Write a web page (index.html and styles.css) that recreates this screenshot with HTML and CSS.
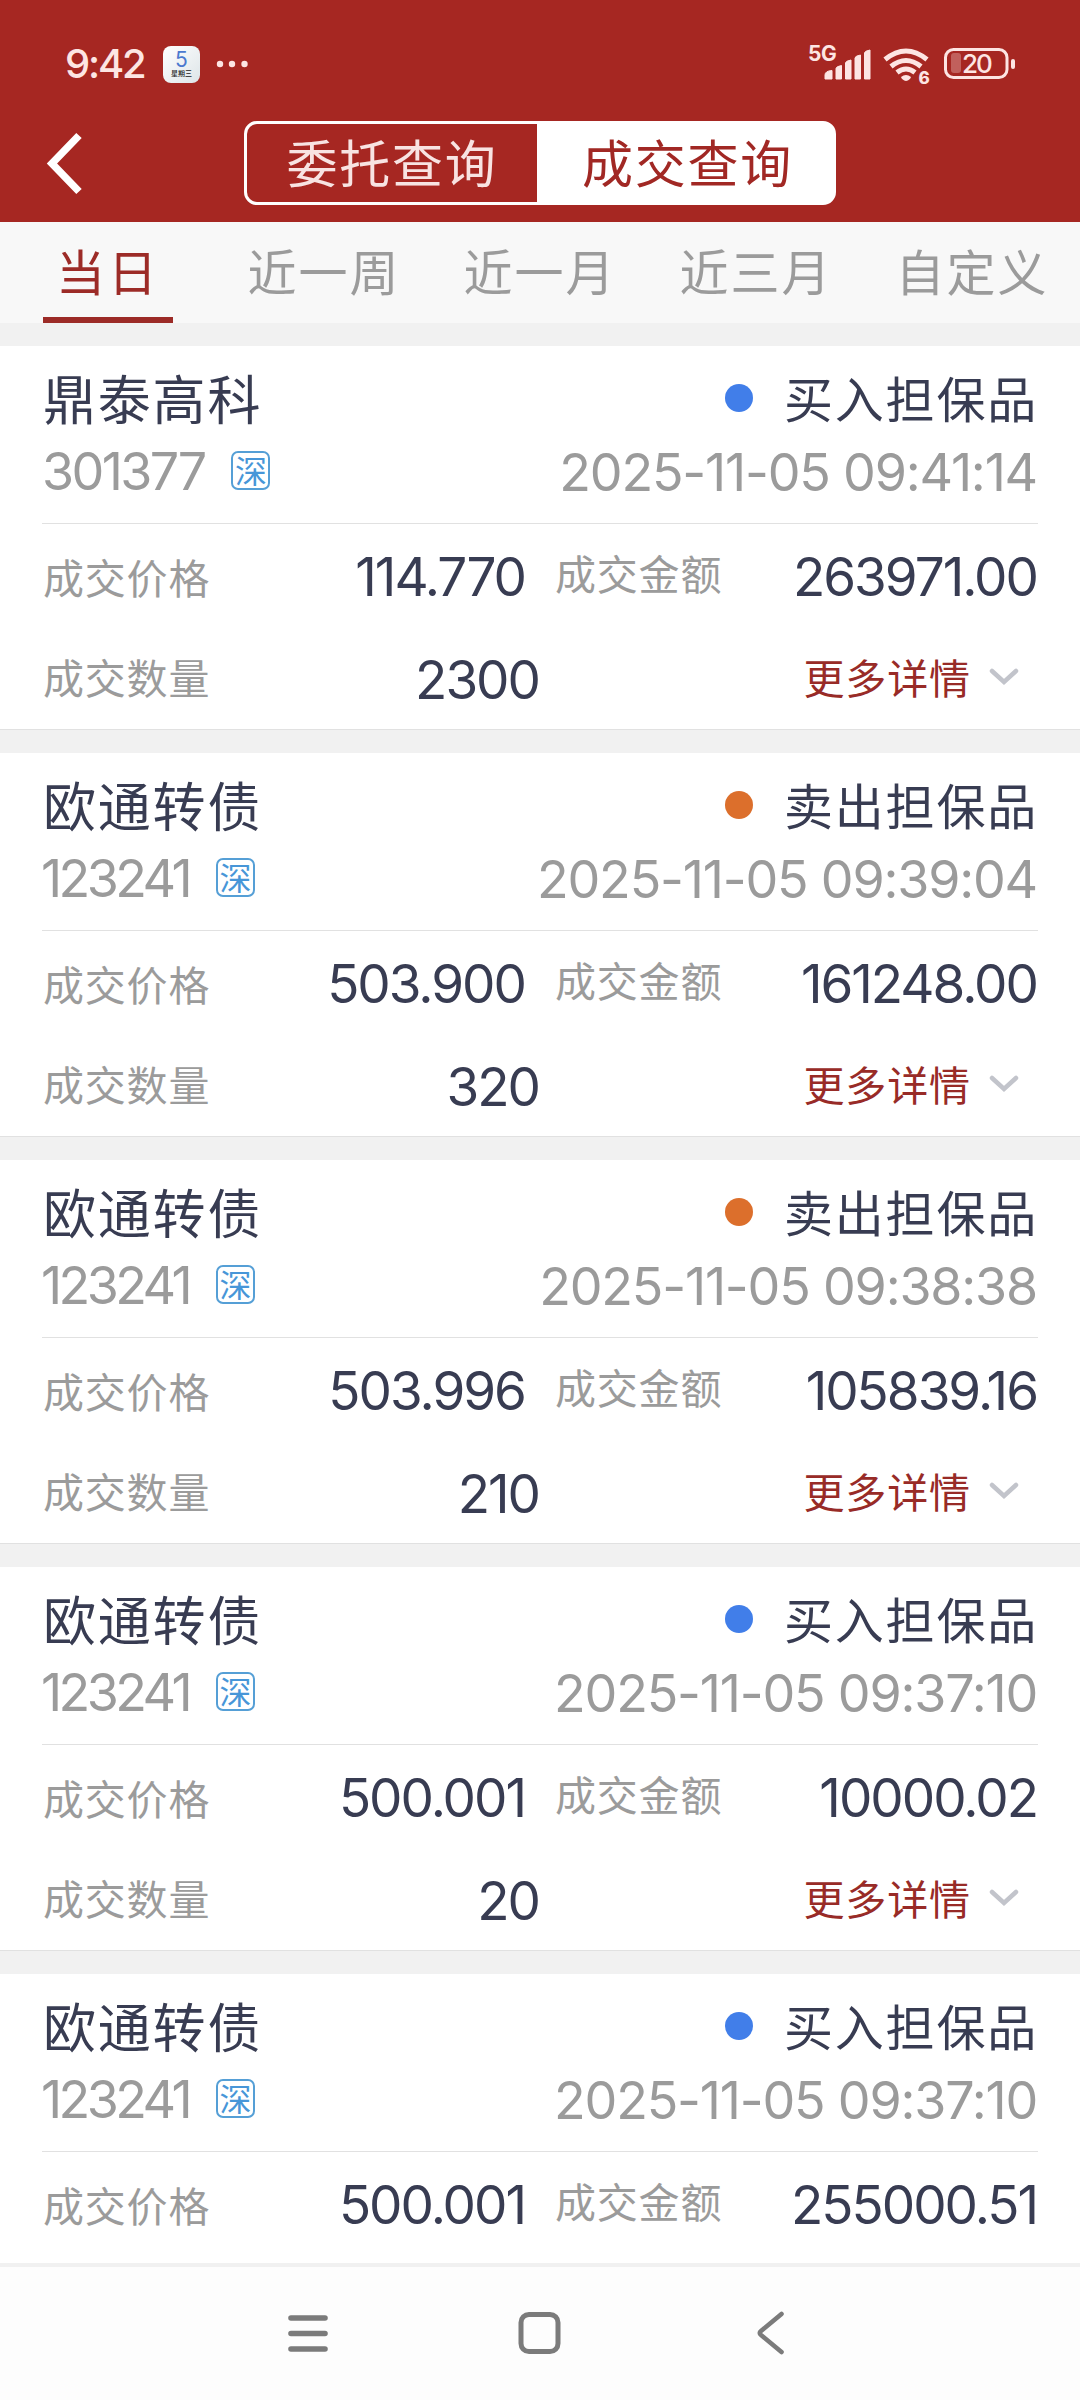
FILE: index.html
```html
<!DOCTYPE html>
<html lang="zh-CN">
<head>
<meta charset="utf-8">
<title>成交查询</title>
<link rel="stylesheet" href="styles.css">
</head>
<body>
<div class="screen">
  <header class="header">
    <div class="status">
      <span class="clock">9:42</span>
      <span class="calendar"><b class="cal-day">5</b><span class="cal-week">星期三</span></span>
      <svg class="more-dots" width="32" height="8" viewBox="0 0 32 8"><circle cx="4" cy="4" r="3.2"/><circle cx="16" cy="4" r="3.2"/><circle cx="28.500" cy="4" r="3.200"/></svg>
      <svg class="signals" width="210" height="44" viewBox="808 42 210 44">
        <text x="808" y="61" class="net">5G</text>
        <path d="M825 79v-4q0-4 7-4.500V79zM836 79V68.500q0-2 5.500-3V79zM845.500 79V63q0-2 5.500-3V79zM855 79V58q0-2 5.500-3V79zM864.500 79V53q0-2 5.500-3V79z" stroke="#fde5e3" stroke-width="1" stroke-linejoin="round"/>
        <g class="waves"><path d="M885 59.500Q906 42.500 927 59.500"/><path d="M891 66.500Q906 54.500 921 66.500"/><path d="M897 72.500Q906 65.500 915 72.500"/></g>
        <path d="M901 77q5-4 10 0-1 3-5 4-4-1-5-4z"/>
        <text x="918.500" y="83.500" class="wifi-gen">6</text>
        <rect class="cell" x="945.500" y="49.500" width="61.500" height="28" rx="8"/>
        <rect class="charge" x="951" y="53" width="10" height="20" rx="3"/>
        <text x="962" y="73" class="level">20</text>
        <rect x="1011" y="59" width="4" height="10" rx="2"/>
      </svg>
    </div>
    <div class="titlebar">
      <svg class="back" width="40" height="64" viewBox="0 0 40 64"><path d="M35 4.500 8 32.500 35 60.500"/></svg>
      <div class="segment"><span class="seg">委托查询</span><span class="seg on">成交查询</span></div>
    </div>
  </header>
  <nav class="tabs">
    <span class="tab active">当日</span><span class="tab">近一周</span><span class="tab">近一月</span><span class="tab">近三月</span><span class="tab">自定义</span>
  </nav>
  <main class="list" id="list"></main>
  <footer class="sysnav">
    <svg width="44" height="44" viewBox="0 0 44 44"><path d="M5 7H39M5 22.500H39M5 38H39" stroke-width="5.600"/></svg>
    <svg width="44" height="44" viewBox="0 0 44 44"><rect x="3" y="3.500" width="37" height="37" rx="8" stroke-width="5"/></svg>
    <svg width="44" height="44" viewBox="0 0 44 44"><path d="M31.500 3 11 20Q8.500 22 11 24L31.500 41" stroke-width="4.600"/></svg>
  </footer>
</div>
<script src="app.js"></script>
</body>
</html>
```
FILE: styles.css
```css
* { box-sizing: border-box; }
body { margin: 0; background: #fff; }
.screen {
  width: 1080px; height: 2400px; overflow: hidden;
  display: flex; flex-direction: column;
  font-family: "Noto Sans CJK SC", sans-serif; color: #383c52;
}
.header { height: 222px; background: #a62722; flex: none; }
.status { height: 121px; padding: 7px 0 0 65px; display: flex; align-items: center; color: #fde5e3; }
.clock { width: 98px; font: 500 40px/44px Inter, sans-serif; letter-spacing: -2.2px; }
.calendar {
  width: 37px; height: 37px; border-radius: 8px; background: linear-gradient(135deg, #fff, #dde5e8);
  display: flex; flex-direction: column; align-items: center; padding-top: 5px;
}
.cal-day { font: 400 21px/18px Inter, sans-serif; color: #4b79cf; }
.cal-week { font-size: 7px; line-height: 9px; color: #222; font-weight: 500; white-space: nowrap; }
.more-dots { margin-left: 16px; fill: #fde5e3; }
.signals { margin-left: auto; margin-right: 62px; fill: #fde5e3; font-family: Inter, sans-serif; }
.net { font-size: 21px; font-weight: 700; letter-spacing: -0.5px; }
.wifi-gen { font-size: 17px; font-weight: 800; }
.level { font-size: 26px; font-weight: 500; letter-spacing: -2px; }
.waves { fill: none; stroke: #fde5e3; stroke-width: 5; }
.cell { fill: none; stroke: #fde5e3; stroke-width: 3; }
.charge { fill: #c1605c; }
.titlebar { height: 84px; display: flex; align-items: center; }
.back { margin-left: 44px; width: 40px; fill: none; stroke: #fff; stroke-width: 7.5; }
.segment {
  margin-left: 160px; width: 592px; height: 84px; border: 3px solid #fff; border-radius: 13px;
  display: flex; background: #fff; overflow: hidden;
}
.seg { flex: 1; text-align: center; font-size: 51px; line-height: 74px; letter-spacing: 1.8px; color: #a12824; }
.seg:first-child { flex: 0 0 290px; background: #a62722; color: #f8e3e2; }
.seg.on { padding-left: 5px; }
.tabs { height: 101px; flex: none; display: flex; background: #f8f8f8; }
.tab {
  width: 216px; display: flex; justify-content: center; position: relative;
  font-size: 49px; line-height: 96px; letter-spacing: 2px; color: #9b9b9b;
}
.tab.active { color: #9c2b27; letter-spacing: 3px; }
.tab.active::after { content: ""; position: absolute; left: 43px; bottom: 0; width: 130px; height: 6px; background: #9c2b27; }
.list { height: 1940px; flex: none; overflow: hidden; background: #f1f1f1; padding-top: 23px; }
.card { height: 384px; margin-bottom: 23px; background: #fff; border-bottom: 1px solid #e1e1e1; padding: 13px 42px 0; }
.line { display: flex; align-items: center; justify-content: space-between; }
.title { height: 75px; }
.name { font-size: 53px; line-height: 75px; letter-spacing: 1.8px; margin-left: 1px; padding-top: 2px; }
.action { display: flex; align-items: center; font-size: 49px; line-height: 75px; letter-spacing: 1.8px; }
.dot { width: 28px; height: 28px; border-radius: 50%; margin: 3px 31px 0 0; background: #417ee9; }
.dot.sell { background: #dc6f2c; }
.meta { height: 74px; font: 400 52px/74px Inter, sans-serif; color: #9b9b9b; }
.code { display: flex; align-items: center; letter-spacing: -2.6px; padding-top: 2px; }
.code.bond { letter-spacing: -3.6px; margin-left: -1px; }
.date { letter-spacing: -1.2px; margin-right: 1px; padding-top: 3px; }
.market {
  width: 39px; height: 39px; border: 2px solid #559fd6; border-radius: 7px; margin: 0 0 4px 27px;
  font: 400 32px/33px "Noto Sans CJK SC", sans-serif; letter-spacing: 0; color: #4796d8; display: flex; justify-content: center;
}
.details { margin-top: 15px; border-top: 1px solid #e1e1e1; display: grid; grid-template-columns: 484px 484px; column-gap: 28px; grid-template-rows: 104px 95px; }
.label { font-size: 41px; letter-spacing: 0.8px; color: #9b9b9b; margin-left: 1px; }
.label.raised { padding-bottom: 8px; }
.value { font: 400 53px/60px Inter, sans-serif; letter-spacing: -2px; padding: 2px 1px 0 0; }
.quantity { margin-right: -14px; }
.quantity .value { padding-top: 8px; }
.more { display: flex; align-items: center; justify-content: flex-end; padding-right: 18px; font-size: 41px; letter-spacing: 0.9px; color: #982b27; }
.more svg { margin: 2px 0 0 17px; fill: none; stroke: #c2c4cb; stroke-width: 4.5; stroke-linecap: round; }
.sysnav {
  height: 137px; border-top: 4px solid #f1f1f1; background: #fdfdfd; flex: none;
  display: flex; justify-content: center; gap: 188px; padding-top: 44px;
}
.sysnav svg { fill: none; stroke: #7b7b7b; stroke-linecap: round; }
```
FILE: app.js
```js
const trades = [
  ["鼎泰高科", "301377", "买入", "2025-11-05 09:41:14", "114.770", "263971.00", "2300"],
  ["欧通转债", "123241", "卖出", "2025-11-05 09:39:04", "503.900", "161248.00", "320"],
  ["欧通转债", "123241", "卖出", "2025-11-05 09:38:38", "503.996", "105839.16", "210"],
  ["欧通转债", "123241", "买入", "2025-11-05 09:37:10", "500.001", "10000.02", "20"],
  ["欧通转债", "123241", "买入", "2025-11-05 09:37:10", "500.001", "255000.51", null]
];
const quantityRow = qty => `
      <div class="line quantity"><span class="label">成交数量</span><span class="value">${qty}</span></div>
      <div class="more">更多详情<svg width="32" height="20" viewBox="0 0 32 20"><path d="M4 4 16 15 28 4"/></svg></div>`;
document.getElementById("list").innerHTML = trades.map(([name, code, side, date, price, amount, qty]) => `
  <article class="card">
    <div class="line title"><span class="name">${name}</span><span class="action"><i class="dot ${side === "卖出" ? "sell" : ""}"></i>${side}担保品</span></div>
    <div class="line meta"><span class="code ${code.startsWith("12") ? "bond" : ""}">${code}<span class="market">深</span></span><span class="date">${date}</span></div>
    <div class="details">
      <div class="line"><span class="label">成交价格</span><span class="value">${price}</span></div>
      <div class="line"><span class="label raised">成交金额</span><span class="value">${amount}</span></div>${qty ? quantityRow(qty) : ""}
    </div>
  </article>`).join("");
```
